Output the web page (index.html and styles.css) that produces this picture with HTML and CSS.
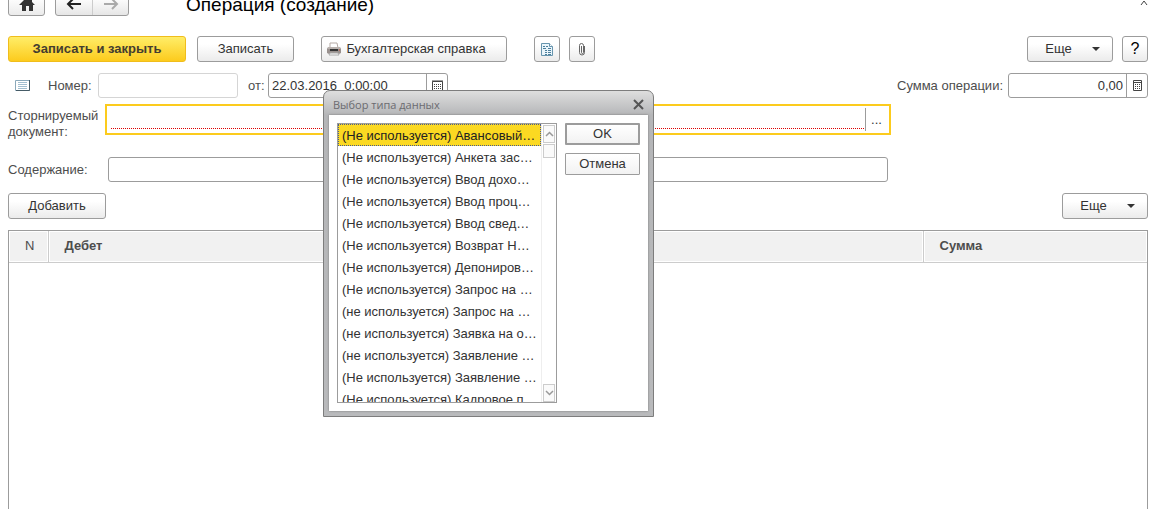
FILE: index.html
```html
<!DOCTYPE html>
<html lang="ru">
<head>
<meta charset="utf-8">
<title>Операция (создание)</title>
<link rel="stylesheet" href="styles.css">
</head>
<body>
<main class="page">
  <header class="topbar">
    <button class="btn nav home" aria-label="Домой">
      <svg width="16" height="16" viewBox="0 0 16 16"><path d="M8 1 0 9h3v6h4v-5h3v5h4V9h2l-3-3V2h-2v2z" fill="#333"/></svg>
    </button>
    <div class="nav-pair">
      <button class="nav" aria-label="Назад"><svg width="16" height="12" viewBox="0 0 16 12"><path d="M7 1 2 6l5 5M2 6h13" fill="none" stroke="#222" stroke-width="2"/></svg></button>
      <button class="nav" aria-label="Вперед"><svg width="16" height="12" viewBox="0 0 16 12"><path d="m9 1 5 5-5 5M14 6H1" fill="none" stroke="#aaa" stroke-width="2"/></svg></button>
    </div>
    <h1 class="title">Операция (создание)</h1>
    <button class="collapse" aria-label="Свернуть"><svg width="8" height="6" viewBox="0 0 8 6"><path d="m1 5 3-4 3 4" fill="none" stroke="#444"/></svg></button>
  </header>

  <div class="toolbar">
    <button class="btn primary">Записать и закрыть</button>
    <button class="btn save">Записать</button>
    <button class="btn report">
      <svg width="14" height="14" viewBox="0 0 14 14"><path d="M3 1h7l1 5H3z" fill="#fff" stroke="#b5aaa5"/><path d="M1 5h12l1 2v4l-2 1H2l-2-1V7z" fill="#99918e"/><path d="M1 6h12" stroke="#d8d1cd"/><path d="M3 8h8" stroke="#333" stroke-width="2"/><path d="M3 11h8l1 2H2z" fill="#fff" stroke="#aaa"/><path d="M12 8h1" stroke="#d35235"/></svg>
      Бухгалтерская справка
    </button>
    <button class="btn square doc" aria-label="Движения документа">
      <svg width="14" height="15" viewBox="0 0 14 15"><path d="M1.500 1.500h8l3 3v9h-11z" fill="#e9f5fb" stroke="#6795ae"/><path d="M9.500 1.500v3h3" fill="#fff" stroke="#6795ae"/><path d="M3 4.500h2m1 0h2M3 6.500h3M5 8.500h2m1 0h3M5 10.500h2m1 0h3M5 12.500h2m1 0h3M8 6.500h3" stroke="#4d7f9c"/></svg>
    </button>
    <button class="btn square" aria-label="Файлы">
      <svg width="8" height="14" viewBox="0 0 8 14"><path d="M3.500 4v6.500a1 1 0 0 0 2 0v-7a2 2 0 0 0-4 0v7a2.500 2.500 0 0 0 5 0V4" fill="none" stroke="#666"/></svg>
    </button>
    <button class="btn more push">Еще <span class="arrow"></span></button>
    <button class="btn square help">?</button>
  </div>

  <div class="row details">
    <svg class="list-icon" width="15" height="11" viewBox="0 0 15 11"><path d="M.5.500h14v10H.5z" fill="#fff" stroke="#8ba9ba"/><path d="M3 2.500h9M3 4.500h9M3 6.500h9M3 8.500h9" stroke="#a3bfd0"/><path d="M14.500 0v10.500H1" fill="none" stroke="#455b66"/></svg>
    <label class="number-label" for="num">Номер:</label>
    <input class="field number" id="num">
    <label class="date-label" for="date">от:</label>
    <div class="combo date">
      <input id="date" value="22.03.2016  0:00:00">
      <button aria-label="Календарь"><svg width="11" height="11" viewBox="0 0 11 11"><path d="M.5 1.500h10v9H.5zM0 1h11" fill="none" stroke="#444"/><path d="M2 4.500h8M2 6.500h8M2 8.500h8" stroke="#444" stroke-dasharray="1 1"/></svg></button>
    </div>
    <label class="push sum-label" for="sum">Сумма операции:</label>
    <div class="combo sum">
      <input id="sum" value="0,00">
      <button aria-label="Калькулятор"><svg width="9" height="11" viewBox="0 0 9 11"><path d="M.5.500h8v10h-8zM1 2.500h7" fill="none" stroke="#444"/><path d="M2 4.500h6M2 6.500h6M2 8.500h6" stroke="#444" stroke-dasharray="1 1"/></svg></button>
    </div>
  </div>

  <div class="row storno">
    <label for="storno">Сторнируемый документ:</label>
    <div class="active-field">
      <input id="storno">
      <button aria-label="Выбрать">...</button>
    </div>
  </div>

  <div class="row content">
    <label for="content">Содержание:</label>
    <input class="field" id="content">
  </div>

  <div class="row commands">
    <button class="btn add">Добавить</button>
    <button class="btn more push">Еще <span class="arrow"></span></button>
  </div>

  <div class="grid">
    <table>
      <thead><tr><th class="col-n">N</th><th>Дебет</th><th class="col-sum">Сумма</th></tr></thead>
    </table>
  </div>
</main>

<section class="dialog" role="dialog" aria-labelledby="dlg-title">
  <header class="dialog-head">
    <h2 id="dlg-title">Выбор типа данных</h2>
    <button aria-label="Закрыть"><svg width="11" height="11" viewBox="0 0 11 11"><path d="m1 1 9 9M10 1l-9 9" stroke="#555" stroke-width="2"/></svg></button>
  </header>
  <div class="dialog-body">
    <div class="list">
      <ul role="listbox" aria-labelledby="dlg-title">
        <li role="option" aria-selected="true" class="selected">(Не используется) Авансовый…</li>
        <li role="option">(Не используется) Анкета зас…</li>
        <li role="option">(Не используется) Ввод дохо…</li>
        <li role="option">(Не используется) Ввод проц…</li>
        <li role="option">(Не используется) Ввод свед…</li>
        <li role="option">(Не используется) Возврат Н…</li>
        <li role="option">(Не используется) Депониров…</li>
        <li role="option">(Не используется) Запрос на …</li>
        <li role="option">(не используется) Запрос на …</li>
        <li role="option">(не используется) Заявка на о…</li>
        <li role="option">(не используется) Заявление …</li>
        <li role="option">(Не используется) Заявление …</li>
        <li role="option">(Не используется) Кадровое п…</li>
      </ul>
      <div class="scroll">
        <button aria-label="Вверх"><svg width="9" height="6" viewBox="0 0 9 6"><path d="m1 5 3.500-3.500L8 5" fill="none" stroke="#999" stroke-width="1.500"/></svg></button>
        <div class="thumb"></div>
        <button class="down" aria-label="Вниз"><svg width="9" height="6" viewBox="0 0 9 6"><path d="m1 1 3.500 3.500L8 1" fill="none" stroke="#999" stroke-width="1.500"/></svg></button>
      </div>
    </div>
    <div class="actions">
      <button class="ok">OK</button>
      <button>Отмена</button>
    </div>
  </div>
</section>
</body>
</html>
```
FILE: styles.css
```css
* { box-sizing: border-box; }
body {
  margin: 0;
  background: #fff;
  color: #4d4d4d;
  font: 13px/16px "Liberation Sans", Arial, sans-serif;
}
button, input { font: inherit; color: #333; margin: 0; padding: 0; }
button { display: flex; align-items: center; justify-content: center; }
input { min-width: 0; outline: 0; }

.page {
  display: flex;
  flex-direction: column;
  height: 100vh;
  padding: 0 7px 0 8px;
  overflow: hidden;
}
.push { margin-left: auto; }

.btn {
  height: 26px;
  border: 1px solid #9c9c9c;
  border-radius: 3px;
  background: linear-gradient(#fff 30%, #ebebeb);
}
.topbar {
  display: flex;
  align-items: flex-end;
  height: 16px;
  flex: none;
}
.nav { height: 27px; padding-top: 2px; }
.home { width: 37px; margin-right: 10px; }
.nav-pair {
  display: flex;
  border: 1px solid #9c9c9c;
  border-radius: 3px;
  background: linear-gradient(#fff 30%, #e6e6e6);
}
.nav-pair button { width: 36px; height: 25px; border: 0; background: none; }
.nav-pair button + button { border-left: 1px solid #ccc; }
.title {
  margin: 0 0 0 57px;
  color: #000;
  font-size: 19px;
  font-weight: 400;
  line-height: 22px;
}
.collapse {
  align-self: flex-start;
  margin-left: auto;
  border: 0;
  background: none;
}

.toolbar { display: flex; margin-top: 20px; }
.primary {
  width: 178px;
  margin-right: 11px;
  border-color: #f0bd1c;
  background: linear-gradient(#ffed68, #fccb1d);
  color: #443d30;
  font-weight: 700;
}
.save { width: 97px; margin-right: 27px; }
.report { width: 186px; gap: 5px; padding-right: 15px; }
.square { width: 26px; }
.doc { margin: 0 9px 0 27px; }
.more { width: 86px; gap: 20px; padding-left: 5px; }
.arrow { border: 4px solid transparent; border-top-color: #333; border-bottom: 0; }
.help { margin-left: 9px; color: #000; font-size: 16px; }

.row { display: flex; align-items: center; }
.field {
  height: 25px;
  border: 1px solid #9c9c9c;
  border-radius: 3px;
  background: #fff;
}
.details { margin-top: 11px; }
.list-icon { margin: 0 18px 0 7px; }
.number-label { width: 50px; }
.number { width: 140px; border-color: #d5d5d5; }
.date-label { width: 30px; padding-left: 10px; }
.combo {
  display: flex;
  height: 25px;
  border: 1px solid #9c9c9c;
  border-radius: 3px;
}
.combo input { flex: 1; padding: 0 3px; border: 0; background: none; white-space: pre; }
.combo button { width: 21px; border: 0; border-left: 1px solid #9c9c9c; background: none; }
.date { width: 180px; }
.sum { width: 140px; }
.sum input { text-align: right; }
.sum-label { margin-right: 5px; }

.storno { align-items: flex-start; margin-top: 6px; }
.storno label { width: 97px; padding-top: 4px; }
.active-field {
  display: flex;
  width: 786px;
  height: 31px;
  padding: 2px 2px 2px 4px;
  border: 2px solid #fccb1d;
}
.active-field input {
  flex: 1;
  height: 21px;
  border: 0;
  border-bottom: 1px dotted #d00;
}
.active-field button {
  width: 22px;
  margin-left: 1px;
  border: 0;
  border-left: 1px solid #9c9c9c;
  background: none;
}
.content { margin-top: 17px; }
.content label { width: 100px; }
.content .field { width: 780px; }
.commands { margin-top: 11px; }
.add { width: 98px; }

.grid { flex: 1; margin-top: 11px; border: 1px solid #9c9c9c; border-bottom: 0; }
table { width: 100%; border-collapse: collapse; table-layout: fixed; }
th {
  height: 31px;
  padding: 0 16px;
  border-right: 1px solid #ccc;
  border-bottom: 1px solid #ccc;
  background: #f1f1f1;
  box-shadow: inset 0 0 0 1px #fff;
  text-align: left;
}
th:last-child { border-right: 0; }
.col-n { width: 39px; font-weight: 400; }
.col-sum { width: 224px; }

.dialog {
  position: absolute;
  top: 90px;
  left: 323px;
  width: 331px;
  padding: 0 5px 5px;
  border: 1px solid #7d7d7d;
  border-radius: 7px 7px 0 0;
  background: linear-gradient(#dedede, #b5b6b8 24px, #b9babc);
}
.dialog-head {
  display: flex;
  align-items: center;
  justify-content: space-between;
  height: 24px;
  padding: 3px 4px 0;
}
.dialog-head h2 {
  margin: 0;
  color: #6b6b70;
  font: 11px/16px "Open Sans", "Noto Sans", sans-serif;
}
.dialog-head button { border: 0; background: none; }
.dialog-body {
  display: flex;
  gap: 8px;
  padding: 8px;
  background: #fff;
  box-shadow: 0 0 2px #777;
}
.list { display: flex; width: 220px; height: 280px; border: 1px solid #9c9c9c; }
.list ul { flex: 1; margin: 0; padding: 0; overflow: hidden; list-style: none; }
.list li {
  height: 22px;
  padding: 0 3px;
  border: 1px solid transparent;
  color: #333;
  line-height: 21px;
  white-space: nowrap;
}
.list .selected { border: 1px dotted #4a5a8a; background: #fbd922; color: #222; }
.scroll {
  display: flex;
  flex-direction: column;
  width: 15px;
  padding: 1px 1px 0;
  border-left: 1px solid #eee;
}
.scroll button { height: 18px; border: 1px solid #ccc; background: #fafafa; }
.thumb { height: 14px; margin-top: 1px; border: 1px solid #ccc; background: #fafafa; }
.scroll .down { margin-top: auto; }
.actions { display: flex; flex: 1; flex-direction: column; gap: 8px; }
.actions button {
  height: 22px;
  border: 1px solid #9c9c9c;
  border-radius: 1px;
  background: linear-gradient(#fff, #f2f2f2);
}
.actions .ok { border-width: 2px; }
```
